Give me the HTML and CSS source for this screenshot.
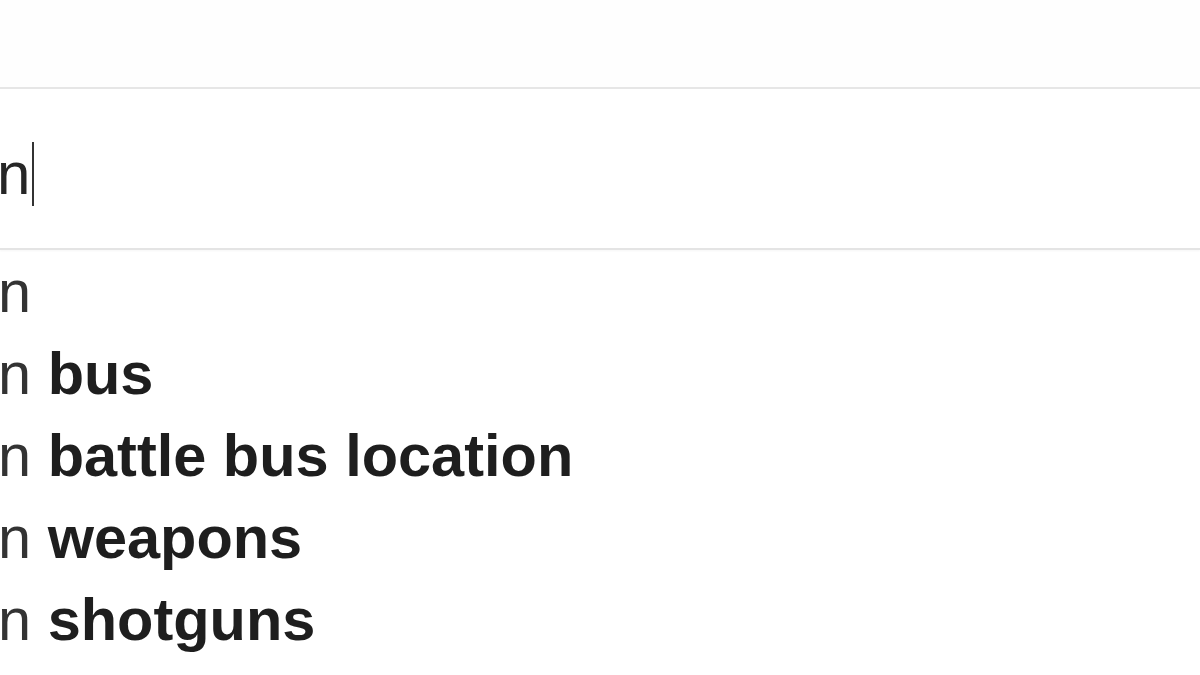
FILE: index.html
```html
<!DOCTYPE html>
<html lang="en">
<head>
<meta charset="utf-8">
<title>Search</title>
<link rel="stylesheet" href="styles.css">
</head>
<body>
<header class="topbar"></header>
<div class="searchbox">
  <div class="query"><span class="typed">n</span><span class="caret"></span></div>
</div>
<ul class="suggestions">
  <li class="row"><span class="prefix">n</span></li>
  <li class="row"><span class="prefix">n</span> <b>bus</b></li>
  <li class="row"><span class="prefix">n</span> <b>battle bus location</b></li>
  <li class="row"><span class="prefix">n</span> <b>weapons</b></li>
  <li class="row"><span class="prefix">n</span> <b>shotguns</b></li>
</ul>
</body>
</html>
```
FILE: styles.css
```css
html, body {
  margin: 0;
  padding: 0;
  background: #ffffff;
  overflow: hidden;
}
body {
  width: 1200px;
  height: 675px;
  font-family: "Liberation Sans", Arial, sans-serif;
  color: #222;
}
.topbar {
  height: 87px;
  background: #fefefe;
}
.searchbox {
  height: 159px;
  border-top: 2px solid #e6e6e6;
  border-bottom: 2px solid #e4e4e4;
  box-shadow: 0 1px 2px rgba(0,0,0,0.04);
  background: #fff;
  display: flex;
  align-items: flex-start;
}
.query {
  margin-left: -3px;
  margin-top: 51px;
  display: flex;
  align-items: center;
  font-size: 60px;
  line-height: 68px;
  color: #262626;
}
.caret {
  display: inline-block;
  width: 2px;
  height: 64px;
  background: #333;
  margin-left: 2px;
}
.suggestions {
  list-style: none;
  margin: 0;
  padding: 0;
  padding-top: 1px;
}
.row {
  font-size: 59.5px;
  line-height: 82px;
  height: 82px;
  margin-left: -2px;
  color: #333;
  white-space: nowrap;
}
.row b {
  color: #1e1e1e;
  font-weight: 700;
}
```
